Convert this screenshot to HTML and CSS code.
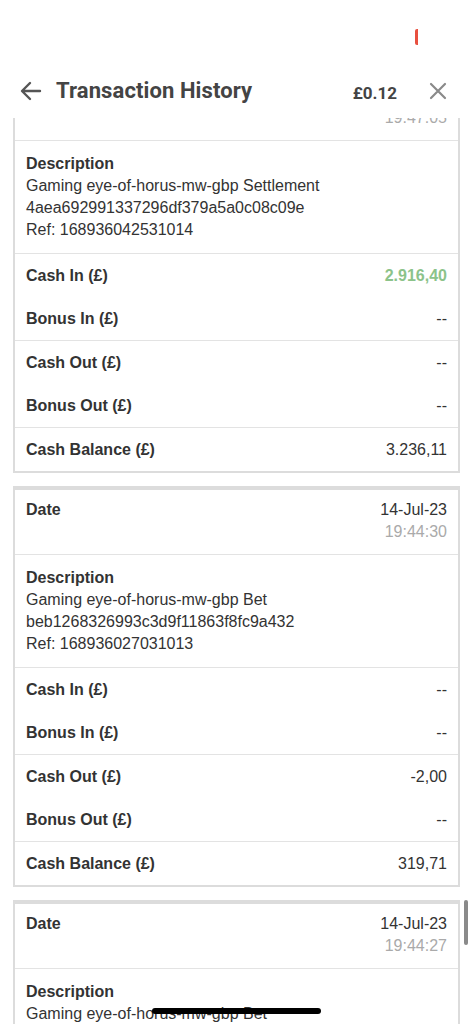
FILE: index.html
```html
<!DOCTYPE html>
<html>
<head>
  <title>Transaction History</title>
  <link rel="stylesheet" href="styles.css">
</head>
<body>
  <div class="screen">
    <div class="status-bar">
      <span class="status-mark"></span>
    </div>
    <div class="header">
      <svg class="back" width="22" height="20" viewBox="0 0 22 20">
        <path d="M20 10H3M10 2L2 10l8 8" fill="none" stroke="#555" stroke-width="2.4" stroke-linecap="round" stroke-linejoin="round"/>
      </svg>
      <h1>Transaction History</h1>
      <span class="balance">£0.12</span>
      <svg class="close" width="18" height="18" viewBox="0 0 18 18">
        <path d="M2 2l14 14M16 2L2 16" fill="none" stroke="#8a8a8a" stroke-width="2.2" stroke-linecap="round"/>
      </svg>
    </div>

    <div class="scroll">
      <div class="list">
        <div class="card">
          <div class="row row-date">
            <span class="label">Date</span>
            <span class="value">14-Jul-23<br><span class="time">19:47:05</span></span>
          </div>
          <div class="row row-desc">
            <span class="label">Description</span>
            <p>Gaming eye-of-horus-mw-gbp Settlement<br>4aea692991337296df379a5a0c08c09e<br>Ref: 168936042531014</p>
          </div>
          <div class="group">
            <div class="row"><span class="label">Cash In (£)</span><span class="value credit">2.916,40</span></div>
            <div class="row"><span class="label">Bonus In (£)</span><span class="value">--</span></div>
          </div>
          <div class="group">
            <div class="row"><span class="label">Cash Out (£)</span><span class="value">--</span></div>
            <div class="row"><span class="label">Bonus Out (£)</span><span class="value">--</span></div>
          </div>
          <div class="group">
            <div class="row"><span class="label">Cash Balance (£)</span><span class="value">3.236,11</span></div>
          </div>
        </div>

        <div class="card">
          <div class="row row-date">
            <span class="label">Date</span>
            <span class="value">14-Jul-23<br><span class="time">19:44:30</span></span>
          </div>
          <div class="row row-desc">
            <span class="label">Description</span>
            <p>Gaming eye-of-horus-mw-gbp Bet<br>beb1268326993c3d9f11863f8fc9a432<br>Ref: 168936027031013</p>
          </div>
          <div class="group">
            <div class="row"><span class="label">Cash In (£)</span><span class="value">--</span></div>
            <div class="row"><span class="label">Bonus In (£)</span><span class="value">--</span></div>
          </div>
          <div class="group">
            <div class="row"><span class="label">Cash Out (£)</span><span class="value">-2,00</span></div>
            <div class="row"><span class="label">Bonus Out (£)</span><span class="value">--</span></div>
          </div>
          <div class="group">
            <div class="row"><span class="label">Cash Balance (£)</span><span class="value">319,71</span></div>
          </div>
        </div>

        <div class="card">
          <div class="row row-date">
            <span class="label">Date</span>
            <span class="value">14-Jul-23<br><span class="time">19:44:27</span></span>
          </div>
          <div class="row row-desc">
            <span class="label">Description</span>
            <p>Gaming eye-of-horus-mw-gbp Bet<br>5c1d0a88e2f4c7b6a9d3e1f0b2c4a687<br>Ref: 168936026731012</p>
          </div>
        </div>
      </div>
      <div class="scrollbar"></div>
    </div>
    <div class="home-indicator"></div>
  </div>
</body>
</html>
```

FILE: styles.css
```css
* {
  box-sizing: border-box;
}

body {
  margin: 0;
  background: #fff;
  font-family: "Liberation Sans", Arial, sans-serif;
  color: #333;
}

.screen {
  position: relative;
  width: 473px;
  height: 1024px;
  overflow: hidden;
  display: flex;
  flex-direction: column;
}

.status-bar {
  height: 64px;
  flex: none;
  position: relative;
}

.status-mark {
  position: absolute;
  left: 415px;
  top: 29px;
  width: 3px;
  height: 16px;
  background: #e8503f;
  border-radius: 2px 0 0 2px;
}

.header {
  height: 54px;
  flex: none;
  display: flex;
  align-items: center;
  padding: 0 26px 0 20px;
  background: #fff;
  position: relative;
  z-index: 2;
}

.header h1 {
  margin: 0 0 0 14px;
  flex: 1;
  font-family: Roboto, "Liberation Sans", sans-serif;
  font-size: 22px;
  line-height: 28px;
  font-weight: 700;
  color: #444;
  letter-spacing: 0.1px;
}

.balance {
  font-family: Roboto, "Liberation Sans", sans-serif;
  font-size: 17px;
  line-height: 22px;
  font-weight: 700;
  color: #444;
  margin-right: 32px;
  padding-top: 3px;
}

.scroll {
  flex: 1;
  overflow: hidden;
  position: relative;
}

.list {
  margin-top: -46px;
  padding: 0 13px;
  display: flex;
  flex-direction: column;
  gap: 13px;
}

.card {
  border: 2px solid #dcdcdc;
  border-top-width: 4px;
  background: #fff;
}

.row {
  display: flex;
  justify-content: space-between;
  align-items: flex-start;
  padding: 12px 11px;
  font-size: 16px;
  line-height: 19px;
}

.label {
  font-weight: 700;
  color: #333;
}

.value {
  text-align: right;
  color: #333;
}

.credit {
  color: #8cc38a;
  font-weight: 700;
}

.row-date {
  padding: 9px 11px 11px;
  line-height: 22px;
  border-bottom: 1px solid #e3e3e3;
}

.time {
  color: #aaa;
}

.row-desc {
  display: block;
  padding: 12px 11px;
  line-height: 22px;
}

.row-desc p {
  margin: 0;
}

.group {
  border-top: 1px solid #e3e3e3;
}

.group .row {
  padding: 12px 11px 11px;
  line-height: 20px;
}

.scrollbar {
  position: absolute;
  right: 5px;
  top: 782px;
  width: 4px;
  height: 45px;
  border-radius: 2px;
  background: #8a8a8a;
}

.home-indicator {
  position: absolute;
  left: 152px;
  bottom: 10px;
  width: 169px;
  height: 6px;
  border-radius: 3px;
  background: #000;
}
```
